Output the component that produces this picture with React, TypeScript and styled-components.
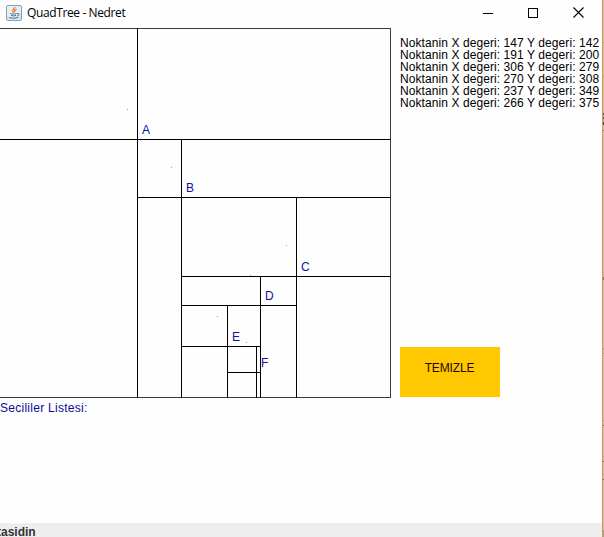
import React from "react";
import styled, { createGlobalStyle } from "styled-components";

const GlobalStyle = createGlobalStyle`
  * { box-sizing: border-box; }
  body { margin: 0; background: #fff; overflow: hidden; }
`;

const Desktop = styled.div`
  display: grid;
  grid-template-columns: 602px 2px;
  width: 604px;
  height: 537px;
  overflow: hidden;
  font: 12px/12px "Liberation Sans", Arial, sans-serif;
  white-space: nowrap;
`;

const Window = styled.main`
  display: flex;
  flex-direction: column;
  min-width: 0;
  background: #fefefe;
`;

const TitleBar = styled.header`
  display: flex;
  align-items: center;
  height: 28px;
  flex: none;
  padding: 0 0 3px 6px;
`;

const Title = styled.h1`
  flex: 1;
  margin: 0 0 0 5px;
  font: 400 12px/16px "Open Sans", "Noto Sans", sans-serif;
  letter-spacing: -0.38px;
  color: #000;
`;

const WindowButton = styled.button`
  display: flex;
  align-items: center;
  justify-content: center;
  width: 45px;
  height: 25px;
  padding: 0;
  border: 0;
  background: none;
`;

const WindowButtons = styled.div`
  display: flex;
  margin-right: 1px;
`;

const Content = styled.div`
  display: flex;
  height: 370px;
  flex: none;
`;

const Tree = styled.svg`
  display: block;
  flex: none;
  font: 12px "Liberation Sans", Arial, sans-serif;
`;

const Side = styled.aside`
  display: flex;
  flex-direction: column;
  justify-content: space-between;
  align-items: flex-start;
  padding: 9px 0 1px 9px;
`;

const PointList = styled.ul`
  list-style: none;
  margin: 0;
  padding: 0;
  color: #000;
  letter-spacing: 0.08px;
`;

const PointRow = styled.li`
  height: 12px;
`;

const ClearButton = styled.button`
  width: 100px;
  height: 50px;
  padding: 0 1px 8px 0;
  border: 0;
  background: #ffc800;
  color: #250500;
  font: inherit;
  letter-spacing: -0.15px;
`;

const Selected = styled.p`
  flex: 1;
  margin: 0;
  padding-top: 4px;
  color: #0a0a94;
  letter-spacing: 0.27px;
`;

const StatusBar = styled.footer`
  height: 14px;
  flex: none;
  overflow: hidden;
  padding-top: 3px;
  background: #eee;
  color: #333;
  font-weight: 700;
  text-indent: -3px;
`;

const Backdrop = styled.div`
  border-left: 1px solid #bd9a7b;
  background: linear-gradient(
    #e6bd7c 0 42px, #c99b57 42px 43px, #e6bd7c 43px 76px, #c99b57 76px 77px,
    #e6bd7c 77px 113px, #51534c 113px 115px, #d6b178 115px 117px,
    #51534c 117px 119px, #d6b178 119px 122px, #4f4030 122px 125px,
    #e8bd80 125px 130px, #ac8244 130px 131px, #e7bd81 131px 277px,
    #9b713b 277px 280px, #e7bd81 280px 348px, #d8a92f 348px 350px,
    #e7bd81 350px 353px, #cf9c28 353px 354px, #e7bd81 354px 420px,
    #d8a92f 420px 421px, #e7bd81 421px 425px, #956a20 425px 426px,
    #e7bd81 426px 456px, #d8a92f 456px 457px, #e7bd81 457px 461px,
    #956a20 461px 462px, #e7bd81 462px 474px, #d8a92f 474px 475px,
    #e7bd81 475px 479px, #956a20 479px 480px, #e7bd81 480px 530px, #b99a70 530px
  );
`;

const points = [
  [147, 142], [191, 200], [306, 279], [270, 308], [237, 349], [266, 375],
];

const verticals = [
  [137, 0, 369], [181, 111, 369], [296, 169, 369],
  [260, 248, 369], [227, 277, 369], [256, 318, 369],
];

const horizontals = [
  [111, 0, 390], [169, 137, 390], [248, 181, 390],
  [277, 181, 296], [318, 181, 260], [344, 227, 260],
];

const labels: [string, number, number][] = [
  ["A", 142, 106], ["B", 186, 164], ["C", 301, 243],
  ["D", 265, 272], ["E", 232, 313], ["F", 261, 339],
];

const dots = [[127, 81], [171, 139], [286, 217], [250, 247], [217, 288], [246, 314]];

const JavaIcon = () => (
  <svg width="16" height="16" viewBox="0 0 16 16" fill="none">
    <rect x=".5" y=".5" width="15" height="15" rx="1.5" fill="#e8f0f5" stroke="#86a1b5" />
    <path d="M1 14.5h14V8l-7 5-7-2z" fill="#d3e1ea" />
    <path d="M8.7 2c.8 1.6-2.7 2.5-1.9 4.3l.9 1.5M10.6 4.2C8.7 5 8 5.8 9.1 7" stroke="#e47b36" strokeWidth="1.3" />
    <path d="M4.2 8.6c1.8.7 4.8.7 6.500 0M5 10.4c1.5.6 3.6.6 5 0M3.2 12.5c2.5 1 6.4.9 8.8-.2M11.2 8.5c2.5-.6 2.3 1.8-.2 2.4" stroke="#456f96" />
  </svg>
);

const QuadTree = () => (
  <Tree width="391" height="370" shapeRendering="crispEdges">
    <path d="M0 .5H390.5V369.5H0" fill="none" stroke="#3c3c3c" />
    {verticals.map(([x, from, to]) => (
      <rect key={x} x={x} y={from} width="1" height={to - from + 1} fill="#000" />
    ))}
    {horizontals.map(([y, from, to]) => (
      <rect key={y} x={from} y={y} width={to - from + 1} height="1" fill="#000" />
    ))}
    {dots.map(([x, y]) => (
      <rect key={x} x={x} y={y} width="1" height="1" fill="#7fa9b0" />
    ))}
    {labels.map(([name, x, y]) => (
      <text key={name} x={x} y={y} fill="#1010a0">{name}</text>
    ))}
  </Tree>
);

export default function App() {
  return (
    <>
      <GlobalStyle />
      <Desktop>
        <Window>
          <TitleBar>
            <JavaIcon />
            <Title>QuadTree - Nedret</Title>
            <WindowButtons>
              <WindowButton aria-label="Minimize">
                <svg width="12" height="10" shapeRendering="crispEdges"><path d="M0 5.5h10" stroke="#000" /></svg>
              </WindowButton>
              <WindowButton aria-label="Maximize">
                <svg width="12" height="10" shapeRendering="crispEdges"><path d="M.5.5h9v9h-9z" fill="none" stroke="#000" /></svg>
              </WindowButton>
              <WindowButton aria-label="Close">
                <svg width="11" height="11"><path d="M.5.5l10 10M10.5.5l-10 10" stroke="#000" strokeWidth="1.1" /></svg>
              </WindowButton>
            </WindowButtons>
          </TitleBar>
          <Content>
            <QuadTree />
            <Side>
              <PointList>
                {points.map(([x, y]) => (
                  <PointRow key={x}>Noktanin X degeri: {x} Y degeri: {y}</PointRow>
                ))}
              </PointList>
              <ClearButton>TEMIZLE</ClearButton>
            </Side>
          </Content>
          <Selected>Secililer Listesi:</Selected>
          <StatusBar>tasidin</StatusBar>
        </Window>
        <Backdrop />
      </Desktop>
    </>
  );
}
